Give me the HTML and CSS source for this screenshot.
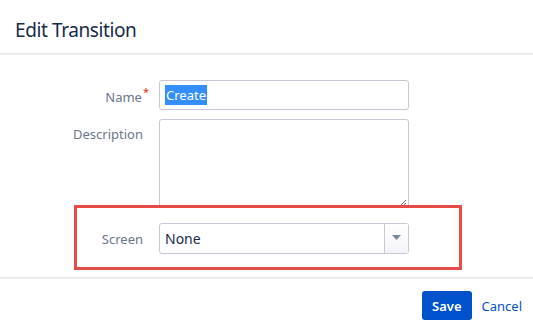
FILE: index.html
```html
<!DOCTYPE html>
<html lang="en">
<head>
<meta charset="UTF-8">
<meta name="viewport" content="width=device-width, initial-scale=1.0">
<title>Edit Transition</title>
<link rel="stylesheet" href="styles.css">
</head>
<body>
<div class="dialog">
  <div class="dialog-header">
    <h2>Edit Transition</h2>
  </div>

  <div class="dialog-body">
    <div class="field">
      <label>Name<span class="req">*</span></label>
      <div class="text-input"><span class="selected">Create</span></div>
    </div>

    <div class="field">
      <label>Description</label>
      <div class="textarea">
        <svg class="grip" width="7" height="7" viewBox="0 0 7 7"><path d="M6 1L1 6M6 4L4 6" stroke="#6b6b6b" stroke-width="1"/></svg>
      </div>
    </div>

    <div class="field field-screen">
      <label>Screen</label>
      <div class="select">
        <span class="select-value">None</span>
        <span class="select-arrow"><svg width="9" height="5" viewBox="0 0 9 5"><path d="M0 0h9L4.5 5z" fill="#7a869a"/></svg></span>
      </div>
    </div>

    <!-- annotation box drawn over the screen row -->
    <div class="highlight-box"></div>
  </div>

  <div class="dialog-footer">
    <button class="btn-save">Save</button>
    <a class="btn-cancel" href="#">Cancel</a>
  </div>
</div>
</body>
</html>
```

FILE: styles.css
```css
body {
  margin: 0;
  font-family: "Noto Sans", "Open Sans", sans-serif;
  background-color: #fff;
  color: #172b4d;
}
.dialog {
  width: 533px;
  height: 330px;
}
.dialog-header {
  height: 55px;
  padding: 6px 0 0 15px;
  border-bottom: 2px solid #ebecf0;
  box-sizing: border-box;
  display: flex;
  align-items: center;
}
.dialog-header h2 {
  margin: 0;
  font-size: 19px;
  font-weight: 400;
  color: #172b4d;
  letter-spacing: -0.4px;
}
.dialog-body {
  position: relative;
  padding-top: 25px;
  height: 224px;
  box-sizing: border-box;
  border-bottom: 2px solid #ebecf0;
}
.field {
  display: grid;
  grid-template-columns: 143px 250px;
  column-gap: 16px;
  margin-bottom: 9px;
}
.field label {
  text-align: right;
  font-size: 13px;
  color: #6b778c;
  padding-top: 6px;
}
.field:first-child label {
  padding-top: 8px;
}
.req {
  color: #de350b;
  font-size: 11px;
  vertical-align: top;
  position: relative;
  top: -4px;
  margin-left: 1px;
  margin-right: -6px;
}
.text-input {
  height: 30px;
  border: 1px solid #c9c6d8;
  border-radius: 3px;
  box-sizing: border-box;
  padding: 4px 5px;
  font-size: 13px;
  line-height: 20px;
}
.selected {
  background-color: #338fff;
  color: #fff;
  display: inline-block;
  padding: 0 1px;
}
.textarea {
  height: 89px;
  border: 1px solid #c9c6d8;
  border-radius: 3px;
  box-sizing: border-box;
  display: flex;
  justify-content: flex-end;
  align-items: flex-end;
  padding: 1px;
}
.grip {
  display: block;
}
.field-screen {
  margin-top: 15px;
}
.field-screen label {
  padding-top: 7px;
}
.select {
  height: 31px;
  border: 1px solid #c9c6d8;
  border-radius: 3px;
  box-sizing: border-box;
  display: flex;
  font-size: 14px;
}
.select-value {
  flex: 1;
  padding: 5px 5px;
  line-height: 19px;
  color: #172b4d;
}
.select-arrow {
  width: 23px;
  border-left: 1px solid #c9c6d8;
  background: linear-gradient(#ffffff, #f4f3f8);
  display: flex;
  align-items: center;
  justify-content: center;
}
.select-arrow svg {
  display: block;
  margin-top: -2px;
}
.highlight-box {
  position: absolute;
  left: 74px;
  top: 150px;
  width: 388px;
  height: 65px;
  border: 3px solid #e84c48;
  box-sizing: border-box;
}
.dialog-footer {
  display: flex;
  justify-content: flex-end;
  align-items: center;
  padding: 12px 11px 0 0;
  gap: 10px;
}
.btn-save {
  height: 29px;
  padding: 0 10px;
  background-color: #0052cc;
  color: #fff;
  border: none;
  border-radius: 3px;
  font-family: inherit;
  font-size: 13px;
  font-weight: 600;
}
.btn-cancel {
  color: #0052cc;
  text-decoration: none;
  font-size: 13px;
}
```
